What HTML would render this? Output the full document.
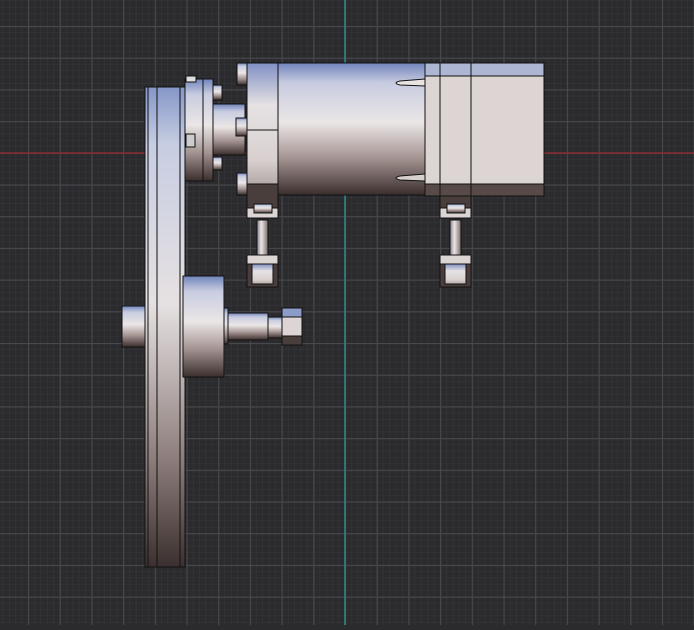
<!DOCTYPE html><html><head><style>html,body{margin:0;padding:0;background:#2b2b2e;overflow:hidden}</style></head><body>
<svg width="694" height="625" viewBox="0 0 694 625" xmlns="http://www.w3.org/2000/svg">
<defs>
<pattern id="minor" width="6.34" height="6.34" patternUnits="userSpaceOnUse" x="28" y="26">
<path d="M0 0H6.34M0 0V6.34" stroke="#36373a" stroke-width="1" fill="none"/></pattern>
<pattern id="major" width="31.7" height="31.7" patternUnits="userSpaceOnUse" x="28" y="26">
<path d="M0 0.5H31.7M0.5 0V31.7" stroke="#48494d" stroke-width="1.2" fill="none"/></pattern>
<linearGradient id="cyl" x1="0" y1="0" x2="0" y2="1">
<stop offset="0" stop-color="#7084bb"/><stop offset="0.15" stop-color="#c8cce0"/><stop offset="0.45" stop-color="#ebe6e6"/><stop offset="0.72" stop-color="#a49492"/><stop offset="1" stop-color="#3a2e2d"/></linearGradient>
<linearGradient id="rod" x1="0" y1="0" x2="1" y2="0">
<stop offset="0" stop-color="#8a8290"/><stop offset="0.4" stop-color="#ebe6e6"/><stop offset="1" stop-color="#7a6c6a"/></linearGradient>
<linearGradient id="belt" x1="0" y1="0" x2="0" y2="1">
<stop offset="0" stop-color="#8597c8"/><stop offset="0.12" stop-color="#c7cde2"/><stop offset="0.45" stop-color="#e6e1e2"/><stop offset="0.78" stop-color="#8b7c7a"/><stop offset="1" stop-color="#3b302f"/></linearGradient>
<linearGradient id="blk" x1="0" y1="0" x2="0" y2="1">
<stop offset="0" stop-color="#8090c4"/><stop offset="0.35" stop-color="#e6e2e4"/><stop offset="0.8" stop-color="#d8d0cf"/><stop offset="1" stop-color="#b5aaa8"/></linearGradient>
</defs>
<rect width="694" height="625" fill="#2b2b2e"/>
<rect width="694" height="625" fill="url(#minor)"/>
<rect width="694" height="625" fill="url(#major)"/>
<line x1="0" y1="153" x2="694" y2="153" stroke="#8a2a30" stroke-width="1.5"/>
<line x1="345" y1="0" x2="345" y2="625" stroke="#2a8a8c" stroke-width="1.5"/>
<g stroke="#111" stroke-width="1">
<rect x="145" y="87" width="40" height="480" fill="url(#belt)"/>
<line x1="148" y1="87" x2="148" y2="567"/><line x1="157" y1="87" x2="157" y2="567"/><line x1="180" y1="87" x2="180" y2="567"/>
<rect x="185" y="79" width="28" height="102" fill="url(#cyl)"/>
<line x1="203" y1="79" x2="203" y2="181"/>
<rect x="186" y="76" width="10" height="6" fill="#ddd"/>
<rect x="186" y="134" width="9" height="13" fill="#ccc"/>
<rect x="213" y="85" width="9" height="15" fill="url(#cyl)"/>
<rect x="213" y="132" width="9" height="12" fill="url(#cyl)"/>
<rect x="213" y="157" width="9" height="13" fill="url(#cyl)"/>
<rect x="213" y="104" width="32" height="51" fill="url(#cyl)"/>
<rect x="237" y="63" width="10" height="22" fill="url(#cyl)"/>
<rect x="236" y="118" width="11" height="18" fill="url(#cyl)"/>
<rect x="237" y="173" width="10" height="22" fill="url(#cyl)"/>
<rect x="247" y="63" width="31" height="121" fill="url(#blk)"/>
<line x1="247" y1="130" x2="278" y2="130"/>
<rect x="247" y="184" width="31" height="34" fill="#4a3e3c"/>
<rect x="278" y="63" width="147" height="132" fill="url(#cyl)"/>
<path d="M425 79 L400 81 Q392 83 400 85 L425 86Z" fill="#e8e4e4"/>
<path d="M425 174 L400 176 Q392 178 400 180 L425 181Z" fill="#d8d0cf"/>
<rect x="425" y="63" width="119" height="133" fill="#ddd5d3"/>
<rect x="425" y="63" width="119" height="13" fill="#adb7d4"/>
<rect x="425" y="184" width="119" height="12" fill="#574a47"/>
<line x1="440" y1="63" x2="440" y2="196"/><line x1="471" y1="63" x2="471" y2="196"/>
<rect x="440" y="196" width="31" height="22" fill="#4a3e3c"/>
<g id="m">
<rect x="247" y="208" width="31" height="10" fill="#ddd5d3"/>
<rect x="254" y="204" width="18" height="9" fill="url(#cyl)"/>
<rect x="257" y="220" width="11" height="35" fill="url(#rod)"/>
<rect x="247" y="255" width="31" height="32" fill="#4a3e3c"/>
<rect x="247" y="255" width="31" height="9" fill="#ddd5d3"/>
<rect x="252" y="264" width="21" height="20" fill="url(#blk)"/>
</g>
<use href="#m" x="193"/>
<rect x="122" y="306" width="23" height="41" fill="url(#cyl)"/>
<rect x="183" y="276" width="41" height="101" fill="url(#cyl)"/>
<rect x="224" y="308" width="4" height="36" fill="url(#cyl)"/>
<rect x="228" y="313" width="40" height="27" fill="url(#cyl)"/>
<rect x="268" y="317" width="14" height="21" fill="url(#cyl)"/>
<rect x="282" y="308" width="20" height="37" fill="#ddd5d3"/>
<rect x="282" y="308" width="20" height="9" fill="#8d9bc8"/>
<rect x="282" y="336" width="20" height="9" fill="#4a3e3c"/>
</g>
</svg></body></html>
